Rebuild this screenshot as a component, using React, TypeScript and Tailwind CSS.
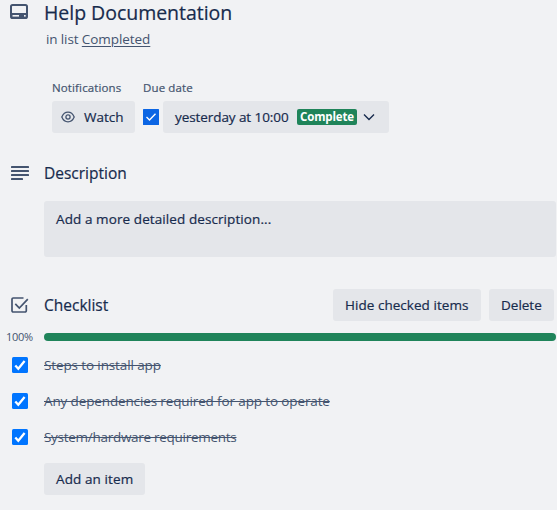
import React from 'react';

const medium = "[-webkit-text-stroke:0.2px_currentColor]";

const button =
  "flex h-8 items-center rounded-[3px] bg-[#e4e6ea] text-[13.5px] text-[#172b4d] whitespace-nowrap [-webkit-text-stroke:0.2px_currentColor]";

function CardIcon() {
  return (
    <svg width="18" height="15" viewBox="0 0 18 15" fill="none" className="block">
      <rect x="1" y="1" width="16" height="13" rx="1.6" stroke="#44546f" strokeWidth="2" />
      <path d="M1 9h16v4a1 1 0 0 1-1 1H2a1 1 0 0 1-1-1z" fill="#44546f" />
      <rect x="2.5" y="11" width="6.5" height="1.6" fill="#f1f2f4" />
      <rect x="14" y="11" width="1.7" height="1.6" fill="#f1f2f4" />
    </svg>
  );
}

function LinesIcon() {
  return (
    <svg width="18" height="14" viewBox="0 0 18 14" fill="#44546f" className="block">
      <rect width="18" height="2" rx="0.6" />
      <rect y="4" width="18" height="2" rx="0.6" />
      <rect y="8" width="18" height="2" rx="0.6" />
      <rect y="12" width="12" height="2" rx="0.6" />
    </svg>
  );
}

function ChecklistIcon() {
  return (
    <svg width="18" height="16" viewBox="0 0 18 16" fill="none" stroke="#44546f" strokeWidth="1.7" className="block">
      <path d="M12.5 1H2.2A1.2 1.2 0 0 0 1 2.2v11.6A1.2 1.2 0 0 0 2.2 15h11.9a1.2 1.2 0 0 0 1.2-1.2V8" />
      <path d="M4.3 6.8l4 4.2L16.8 2.2" />
    </svg>
  );
}

function EyeIcon() {
  return (
    <svg width="14" height="12" viewBox="0 0 14 12" fill="none" stroke="#44546f" strokeWidth="1.3" className="block">
      <path d="M0.8 6C2.2 2.7 4.3 1.2 7 1.2S11.8 2.7 13.2 6C11.8 9.3 9.7 10.8 7 10.8S2.2 9.3 0.8 6z" />
      <circle cx="7" cy="6" r="2.1" />
    </svg>
  );
}

function ItemCheck() {
  return (
    <svg width="16" height="16" viewBox="0 0 16 16" className="block">
      <rect width="16" height="16" rx="1.5" fill="#0075ff" />
      <path d="M3.3 8.4l3 3.3L12.6 4" fill="none" stroke="#fff" strokeWidth="2.3" />
    </svg>
  );
}

const items = [
  { text: "Steps to install app", tracking: "tracking-[-0.12px]" },
  { text: "Any dependencies required for app to operate", tracking: "tracking-[-0.13px]" },
  { text: "System/hardware requirements", tracking: "tracking-[-0.28px]" },
];

export default function App() {
  return (
    <main className="h-[510px] w-[557px] overflow-hidden bg-[#f1f2f4] font-['Open_Sans','Noto_Sans',sans-serif] text-[#172b4d]">
      <header className="flex h-[88px] pt-1">
        <div className="w-11 pl-[10px]"><CardIcon /></div>
        <div className="-mt-1">
          <h1 className={`h-[26px] text-[19.5px] leading-[26px] tracking-[-0.03px] ${medium}`}>Help Documentation</h1>
          <p className="mt-[3px] pl-[2px] text-[13.5px] leading-5 tracking-[-0.12px] text-[#44546f]">
            in list <span className="tracking-[-0.06px] underline underline-offset-2">Completed</span>
          </p>
        </div>
      </header>

      <section className="-mt-2 flex gap-2 pl-[52px]">
        <div>
          <h3 className={`h-[21px] text-[11.5px] leading-4 tracking-[0.13px] text-[#44546f] ${medium}`}>Notifications</h3>
          <button className={`${button} w-[83px] gap-[9px] pl-[9px]`}><EyeIcon />Watch</button>
        </div>
        <div>
          <h3 className={`h-[21px] text-[11.5px] leading-4 tracking-[0.13px] text-[#44546f] ${medium}`}>Due date</h3>
          <div className="flex items-center gap-1">
            <svg width="16" height="16" viewBox="0 0 16 16">
              <rect width="16" height="16" rx="0.5" fill="#0c66e4" />
              <path d="M3.5 8l3 3 6-6.2" fill="none" stroke="#fff" strokeWidth="1.4" />
            </svg>
            <button className={`${button} w-[226px] pl-3`}>
              <span className="w-[122px] text-left tracking-[-0.08px]">yesterday at 10:00</span>
              <span className="flex h-4 w-[60px] items-center justify-center rounded-[2px] bg-[#1f845a] text-[11.5px] leading-4 font-bold tracking-[-0.15px] text-white [-webkit-text-stroke:0px]">Complete</span>
              <svg width="12" height="8" viewBox="0 0 12 8" className="ml-[6px]">
                <path d="M1 1.5l5 5 5-5" fill="none" stroke="#172b4d" strokeWidth="1.4" />
              </svg>
            </button>
          </div>
        </div>
      </section>

      <section className="mt-[29px] h-[127px]">
        <div className="flex h-[22px] items-center">
          <div className="w-11 pl-[11px]"><LinesIcon /></div>
          <h2 className={`text-[15.5px] leading-5 ${medium}`}>Description</h2>
        </div>
        <div className={`mt-[17px] mr-px ml-11 h-14 rounded-[3px] bg-[#e4e6ea] px-3 pt-2 text-[13.5px] leading-5 tracking-[0.09px] ${medium}`}>
          Add a more detailed description...
        </div>
      </section>

      <section>
        <div className="flex h-8 items-center pr-[3px]">
          <div className="w-11 pl-[11px]"><ChecklistIcon /></div>
          <h2 className={`flex-1 text-[15.5px] leading-5 ${medium}`}>Checklist</h2>
          <button className={`${button} mr-2 w-[148px] pl-3 tracking-[0.04px]`}>Hide checked items</button>
          <button className={`${button} w-[65px] pl-3`}>Delete</button>
        </div>
        <div className="mt-2 flex h-4 items-center pl-[6px]">
          <span className="w-[38px] text-[11px] tracking-[-0.3px] text-[#44546f]">100%</span>
          <div className="h-2 w-[512px] rounded bg-[#1f845a]" />
        </div>
        <ul className="mt-[2px]">
          {items.map((i) => (
            <li key={i.text} className="flex h-9 items-center">
              <div className="w-11 pl-3"><ItemCheck /></div>
              <span className={`text-[13.5px] leading-5 text-[#44546f] line-through ${i.tracking}`}>{i.text}</span>
            </li>
          ))}
        </ul>
        <button className={`${button} mt-2 ml-11 w-[101px] pl-3 tracking-[0.1px]`}>Add an item</button>
      </section>
    </main>
  );
}
